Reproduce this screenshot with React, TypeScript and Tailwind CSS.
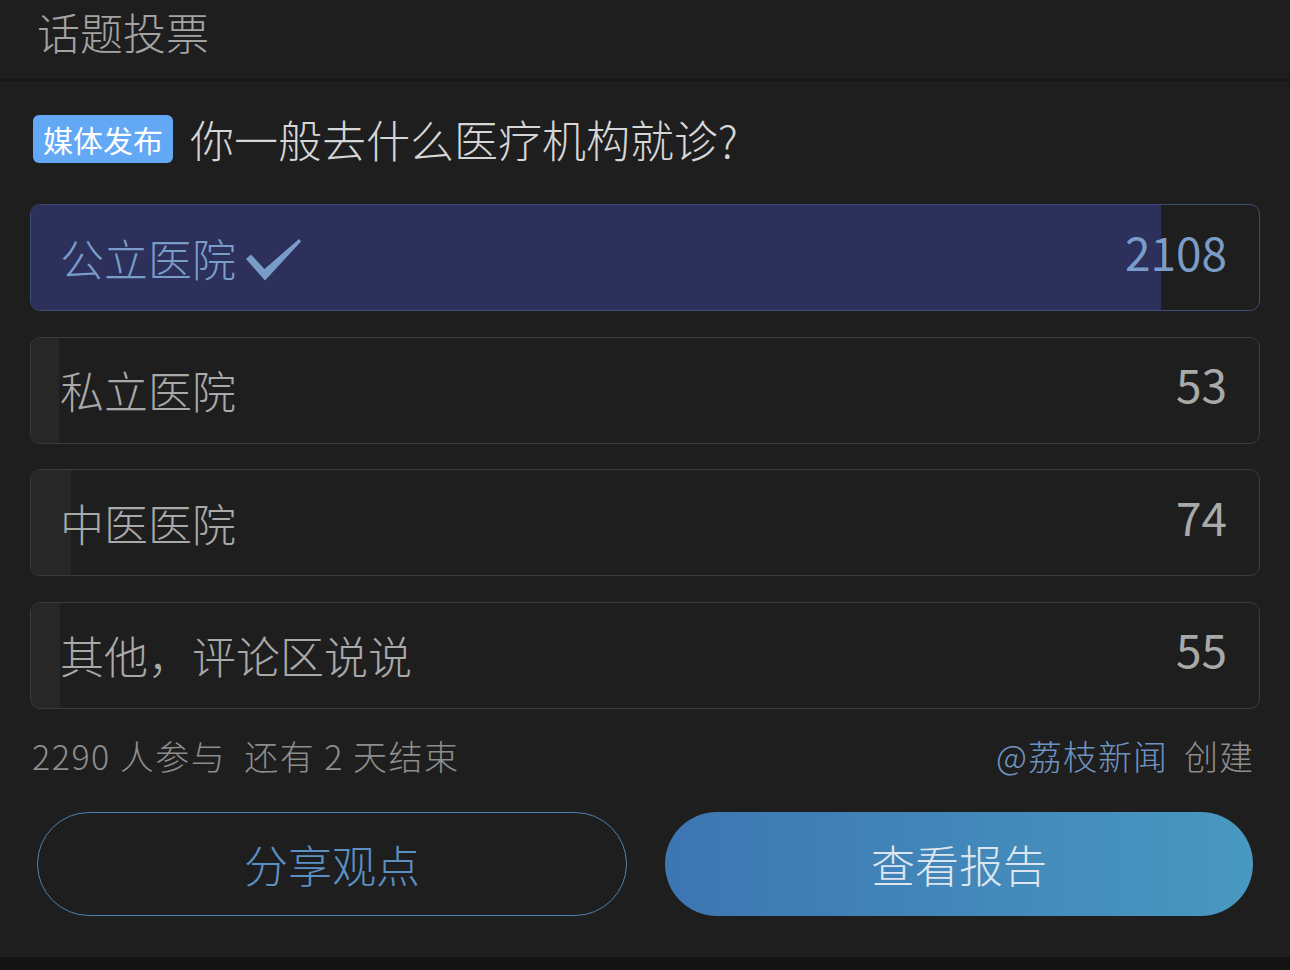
import React from 'react';

interface Choice {
  label: string;
  votes: number;
  picked?: boolean;
}

const TOTAL = 2290;

const choices: Choice[] = [
  { label: '公立医院', votes: 2108, picked: true },
  { label: '私立医院', votes: 53 },
  { label: '中医医院', votes: 74 },
  { label: '其他，评论区说说', votes: 55 },
];

const font = "font-['Noto_Sans_CJK_SC','Noto_Sans',sans-serif]";

function Check() {
  return (
    <svg width="56" height="44" viewBox="0 0 56 44" className="ml-[10px] mt-[4px]">
      <path d="M0 21 L5 16.5 L18.5 31 L53 1 L55 3.5 L19 42.5 Z" fill="#7a9cc8" />
    </svg>
  );
}

function ChoiceRow({ c }: { c: Choice }) {
  const pct = (c.votes / TOTAL) * 100;
  return (
    <div
      className={`relative h-[107px] rounded-[10px] border overflow-hidden ${
        c.picked ? 'border-[#3e4b74]' : 'border-[#3b3b3b]'
      }`}
    >
      <div
        className={`absolute inset-y-0 left-0 ${c.picked ? 'bg-[#2c305a]' : 'bg-[#272727]'}`}
        style={{ width: `${pct}%` }}
      />
      <div className="relative h-full flex items-center justify-between pl-[29px] pr-[32px]">
        <div className="flex items-center">
          <span
            className={`text-[44px] leading-none ${c.picked ? 'text-[#7a9cc8]' : 'text-[#a9a9a9]'}`}
          >
            {c.label}
          </span>
          {c.picked && <Check />}
        </div>
        <span
          className={`text-[46px] leading-none mb-[14px] font-normal ${c.picked ? 'text-[#7a9cc8]' : 'text-[#a9a9a9]'}`}
        >
          {c.votes}
        </span>
      </div>
    </div>
  );
}

export default function App() {
  return (
    <div className={`w-full h-[970px] bg-[#1e1e1e] flex flex-col font-light ${font}`}>
      {/* titre */}
      <div className="h-[81px] px-[37px] border-b-2 border-[#161616]">
        <div className="h-[62px] flex items-center text-[43px] leading-none text-[#a3a3a3]">
          话题投票
        </div>
      </div>

      <div className="flex-1 px-[30px]">
        {/* question */}
        <div className="flex items-center mt-[34px] pl-[3px]">
          <span className="h-[48px] px-[10px] rounded-[6px] bg-[#62a8f4] text-white text-[30px] leading-none flex items-center font-normal">
            媒体发布
          </span>
          <span className="ml-[17px] text-[44px] leading-none text-[#d6d6d6]">
            你一般去什么医疗机构就诊?
          </span>
        </div>

        {/* options */}
        <div className="mt-[41px] flex flex-col gap-[25.5px]">
          {choices.map((c) => (
            <ChoiceRow key={c.label} c={c} />
          ))}
        </div>

        {/* infos */}
        <div className="mt-[28px] h-[38px] flex items-center justify-between pl-[2px] pr-[6px] text-[34px] leading-none">
          <span className="text-[#8d8d8d] whitespace-pre tracking-[1.5px]">2290 人参与  还有 2 天结束</span>
          <span className="flex items-center tracking-[1px]">
            <span className="text-[#6f93c0]">@荔枝新闻</span>
            <span className="text-[#8d8d8d] ml-[16px]">创建</span>
          </span>
        </div>
      </div>

      {/* boutons */}
      <div className="flex gap-[38px] px-[37px] pb-[41px]">
        <button className="flex-1 h-[104px] rounded-full border-[1.5px] border-[#4e80ae] text-[44px] leading-none text-[#5b90c3]">
          分享观点
        </button>
        <button className="flex-1 h-[104px] rounded-full bg-gradient-to-r from-[#3d76b2] to-[#4898c1] text-[44px] leading-none text-[#dde6ee]">
          查看报告
        </button>
      </div>
      <div className="h-[13px] bg-[#141414]" />
    </div>
  );
}
